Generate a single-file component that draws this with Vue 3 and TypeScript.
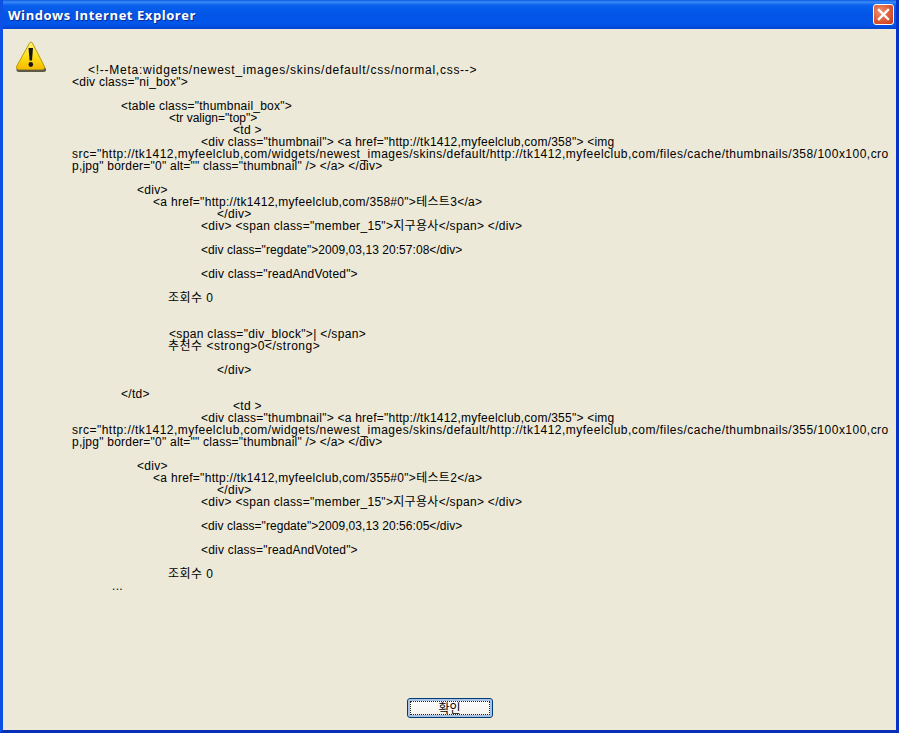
<script setup lang="ts">
interface Line { x: number; t: string; s: number }
const L = (x: number, t: string, s = 0.3): Line => ({ x, t, s })
const blank = L(0, '\u00a0')
const block = (id: string, title: string, time: string): Line[] => [
  L(129, '<div class="thumbnail"> <a href="http://tk1412,myfeelclub,com/' + id + '"> <img', 0.23),
  L(0, 'src="http://tk1412,myfeelclub,com/widgets/newest_images/skins/default/http://tk1412,myfeelclub,com/files/cache/thumbnails/' + id + '/100x100,cro', 0.48),
  L(0, 'p,jpg" border="0" alt="" class="thumbnail" /> </a> </div>', 0.23),
  blank,
  L(65, '<div>'),
  L(81, '<a href="http://tk1412,myfeelclub,com/' + id + '#0">' + title + '</a>', 0.3),
  L(145, '</div>'),
  L(129, '<div> <span class="member_15">지구용사</span> </div>', 0.31),
  blank,
  L(129, '<div class="regdate">2009,03,13 ' + time + '</div>', 0.05),
  blank,
  L(129, '<div class="readAndVoted">', 0.2),
  blank,
  L(96, '조회수 0', 0.45),
]
const lines: Line[] = [
  L(16, '<!--Meta:widgets/newest_images/skins/default/css/normal,css-->', 0.74),
  L(0, '<div class="ni_box">', 0.25),
  blank,
  L(49, '<table class="thumbnail_box">', 0.23),
  L(97, '<tr valign="top">', 0),
  L(161, '<td >'),
  ...block('358', '테스트3', '20:57:08'),
  blank,
  blank,
  L(97, '<span class="div_block">| </span>', 0.33),
  L(96, '추천수 <strong>0</strong>', 0.5),
  blank,
  L(145, '</div>'),
  blank,
  L(49, '</td>'),
  L(161, '<td >'),
  ...block('355', '테스트2', '20:56:05'),
  L(40, '...'),
]
</script>

<template>
  <div class="window">
    <header class="titlebar">
      <span class="title">Windows Internet Explorer</span>
      <button class="close" aria-label="닫기">
        <svg width="13" height="13" viewBox="0 0 13 13">
          <path d="M2 2 L11 11 M11 2 L2 11" stroke="#fff" stroke-width="2.4" stroke-linecap="square" fill="none" />
        </svg>
      </button>
    </header>
    <main class="client">
      <div class="message">
        <svg class="icon" width="32" height="32" viewBox="0 0 32 32">
          <defs>
            <linearGradient id="warn" x1="0" y1="0" x2="0" y2="1">
              <stop offset="0" stop-color="#fff27a" />
              <stop offset="0.5" stop-color="#ffe21a" />
              <stop offset="1" stop-color="#f5b800" />
            </linearGradient>
          </defs>
          <path d="M16 3 L31 28 Q31.500 31 28.500 31 L4 31 Q1 31 1.500 28 Z" fill="#5c5a44" />
          <path d="M14.700 1.800 Q16 0.200 17.300 1.800 L29.500 25.500 Q30 28.300 27.500 28.500 L3.500 28.500 Q1 28.300 1.500 25.500 Z" fill="url(#warn)" stroke="#b89a10" stroke-width="1" />
          <path d="M13.500 7 L18 7 L17 19.500 L14.600 19.500 Z" fill="#141414" />
          <ellipse cx="15.800" cy="23.500" rx="2.300" ry="2.400" fill="#141414" />
        </svg>
        <div class="text">
          <div v-for="(line, i) in lines" :key="i" class="line" :style="{ paddingLeft: line.x + 'px', letterSpacing: line.s + 'px' }">{{ line.t }}</div>
        </div>
      </div>
      <footer class="actions">
        <button class="ok">확인</button>
      </footer>
    </main>
  </div>
</template>

<style>
html, body { margin: 0; background: #ece9d8; }
</style>

<style scoped>
.window {
  width: 899px;
  height: 733px;
  box-sizing: border-box;
  display: flex;
  flex-direction: column;
  background: #0a53e0;
  border: 3px solid #0a48d8;
  border-top: 0;
  border-left-color: #0c50e6;
  border-right-color: #0831c8;
  border-bottom-color: #0831b8;
  overflow: hidden;
}
.titlebar {
  height: 29px;
  flex: none;
  margin: 0 -3px;
  padding: 0 5px 0 8px;
  display: flex;
  align-items: center;
  justify-content: space-between;
  background: linear-gradient(#0a5ae0 0, #3a8cf8 2px, #0a62ee 5px, #0255e6 14px, #0256ea 24px, #0443d0 29px);
}
.title {
  color: #fff;
  font: bold 13px "Open Sans", sans-serif;
  letter-spacing: 0.55px;
  text-shadow: 1px 1px 0 #0a2a90;
}
.close {
  width: 21px;
  height: 21px;
  padding: 0;
  display: flex;
  align-items: center;
  justify-content: center;
  border: 1px solid #fff;
  border-radius: 3px;
  background: radial-gradient(circle at 35% 35%, #f0906c, #d8502e 65%, #c03a1a);
}
.client {
  flex: 1;
  min-height: 0;
  display: flex;
  flex-direction: column;
  background: #ece9d8;
}
.message {
  flex: 1;
  min-height: 0;
  display: flex;
  padding: 12px 0 0 12px;
}
.icon { flex: none; margin-right: 25px; }
.text {
  padding-top: 23px;
  width: 822px;
  color: #000;
  font: 12px/12px "Liberation Sans", "Noto Sans CJK KR", sans-serif;
}
.line { white-space: pre; height: 12px; }
.actions {
  flex: none;
  display: flex;
  justify-content: center;
  padding-bottom: 12px;
}
.ok {
  width: 86px;
  height: 20px;
  padding: 0;
  box-sizing: border-box;
  border: 1px solid #003c74;
  border-radius: 3px;
  outline: 1px dotted #222;
  outline-offset: -4px;
  background: linear-gradient(#fff, #f4f3ee 80%, #dcd8c8);
  box-shadow: inset 0 0 0 2px #a9c2e8;
  color: #000;
  font: 12px/16px "Noto Sans CJK KR", sans-serif;
}
</style>
